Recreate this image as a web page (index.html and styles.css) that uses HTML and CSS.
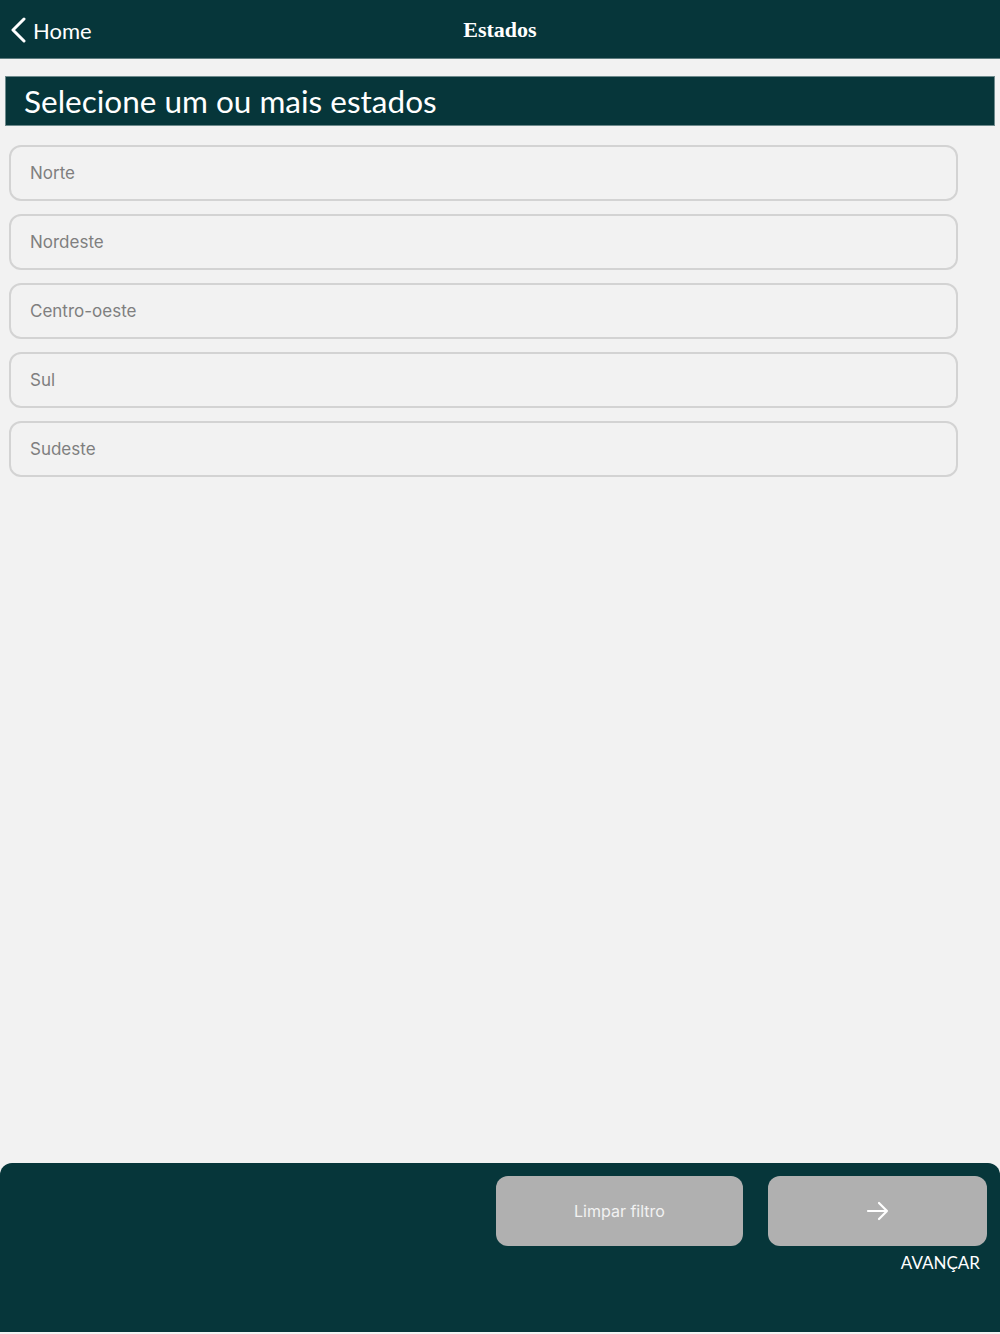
FILE: index.html
```html
<!DOCTYPE html>
<html lang="pt">
<head>
  <meta charset="UTF-8" />
  <title>Estados</title>
  <link rel="stylesheet" href="styles.css">
</head>
<body>

  <header class="topbar">
    <a class="back" href="#">
      <svg width="18" height="26" viewBox="0 0 18 26"><path d="M15 2 L4 13 L15 24" fill="none" stroke="#fff" stroke-width="3" stroke-linecap="round" stroke-linejoin="round"/></svg>
      <span>Home</span>
    </a>
    <h1 class="page-title">Estados</h1>
  </header>

  <main class="content">
    <h2 class="section-title">Selecione um ou mais estados</h2>
    <ul class="regions">
      <li class="region">Norte</li>
      <li class="region">Nordeste</li>
      <li class="region">Centro-oeste</li>
      <li class="region">Sul</li>
      <li class="region">Sudeste</li>
    </ul>
  </main>

  <footer class="actions">
    <button class="btn clear">Limpar filtro</button>
    <div class="next-wrap">
      <button class="btn next">
        <svg width="24" height="22" viewBox="0 0 24 22"><path d="M2 11 H21 M13 3 L21 11 L13 19" fill="none" stroke="#fff" stroke-width="2.2" stroke-linecap="round" stroke-linejoin="round"/></svg>
      </button>
      <span class="next-label">AVANÇAR</span>
    </div>
  </footer>

</body>
</html>
```

FILE: styles.css
```css
body {
  margin: 0;
  background: #f2f2f2;
  font-family: Lato, sans-serif;
  height: 1334px;
  display: flex;
  flex-direction: column;
}
.topbar {
  height: 58px;
  background: #06363a;
  border-bottom: 1px solid #5d7b7e;
  display: flex;
  align-items: center;
  position: relative;
}
.back {
  display: flex;
  align-items: center;
  gap: 6px;
  padding: 2px 0 0 9px;
  color: #fff;
  text-decoration: none;
  font-size: 22px;
  position: relative;
  z-index: 1;
}
.page-title {
  position: absolute;
  left: 0;
  right: 0;
  top: 17px;
  margin: 0;
  text-align: center;
  font-family: "Liberation Serif", serif;
  font-weight: bold;
  font-size: 22px;
  line-height: 26px;
  color: #fff;
}
.content {
  flex: 1;
  padding: 17px 5px 0;
}
.section-title {
  margin: 0;
  height: 50px;
  background: #06363a;
  border: 1px solid #6e8a8c;
  box-sizing: border-box;
  color: #fff;
  font-weight: normal;
  font-size: 31.5px;
  line-height: 48px;
  padding-left: 18px;
}
.regions {
  list-style: none;
  margin: 19px 0 0;
  padding: 0 37px 0 4px;
  display: flex;
  flex-direction: column;
  gap: 13px;
}
.region {
  height: 56px;
  box-sizing: border-box;
  border: 2px solid #d3d3d3;
  border-radius: 12px;
  display: flex;
  align-items: center;
  padding: 0 0 0 19px;
  font-family: Inter, sans-serif;
  font-size: 17px;
  color: #7f7f7f;
}
.actions {
  height: 169px;
  margin-bottom: 2px;
  background: #06363a;
  border-radius: 12px 12px 0 0;
  box-sizing: border-box;
  padding: 13px 13px 0 496px;
  display: flex;
  gap: 25px;
}
.btn {
  height: 70px;
  border: none;
  border-radius: 12px;
  background: #b0b0b0;
  color: #f2f2f2;
  font-family: Inter, sans-serif;
  font-size: 16px;
  padding-bottom: 2px;
  cursor: pointer;
}
.clear {
  width: 247px;
}
.next-wrap {
  flex: 1;
  display: flex;
  flex-direction: column;
  align-items: flex-end;
}
.next {
  width: 100%;
  display: flex;
  align-items: center;
  justify-content: center;
}
.next-label {
  margin-top: 6px;
  margin-right: 7px;
  color: #fff;
  font-size: 17px;
}
```
